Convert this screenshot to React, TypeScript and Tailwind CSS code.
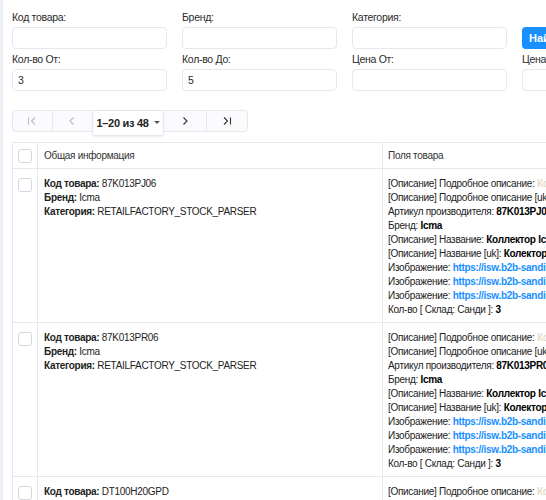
import React from 'react';

type Line = { label: React.ReactNode; value?: string; kind?: 'bold' | 'link' | 'faint' };

const fieldLines = (article: string): Line[] => [
  { label: '[Описание] Подробное описание: ', value: 'Коллектор Icma', kind: 'faint' },
  { label: '[Описание] Подробное описание [uk]: ', value: 'Колектор Icma', kind: 'faint' },
  { label: 'Артикул производителя: ', value: article, kind: 'bold' },
  { label: 'Бренд: ', value: 'Icma', kind: 'bold' },
  { label: '[Описание] Название: ', value: 'Коллектор Icma 1" 6 выходов', kind: 'bold' },
  { label: '[Описание] Название [uk]: ', value: 'Колектор Icma 1" 6 виходів', kind: 'bold' },
  { label: 'Изображение: ', value: 'https://isw.b2b-sandi.com.ua/imagecache/full/8/7/87K013.jpg', kind: 'link' },
  { label: 'Изображение: ', value: 'https://isw.b2b-sandi.com.ua/imagecache/full/8/7/87K013_1.jpg', kind: 'link' },
  { label: 'Изображение: ', value: 'https://isw.b2b-sandi.com.ua/imagecache/full/8/7/87K013_2.jpg', kind: 'link' },
  { label: 'Кол-во [ Склад: Санди ]: ', value: '3', kind: 'bold' },
];

const rows = [
  { code: '87K013PJ06', brand: 'Icma', category: 'RETAILFACTORY_STOCK_PARSER' },
  { code: '87K013PR06', brand: 'Icma', category: 'RETAILFACTORY_STOCK_PARSER' },
  { code: 'DT100H20GPD', brand: 'Icma', category: 'RETAILFACTORY_STOCK_PARSER' },
];

function Checkbox() {
  return <div className="w-[14px] h-[14px] rounded-[3px] border border-[#d4d7e0] bg-white" />;
}

function Field({ label, value }: { label: string; value?: string }) {
  return (
    <div className="flex flex-col">
      <label className="h-4 leading-4 text-[10.5px] tracking-[-0.3px] text-[#2b2b2b]">{label}</label>
      <div className="mt-[2px] h-[22px] rounded-[4px] border border-[#e6e8f0] bg-white px-[5px] text-[10.5px] leading-[20px] text-[#2b2b2b]">
        {value}
      </div>
    </div>
  );
}

function PageIcon({ d }: { d: string }) {
  return (
    <svg width="12" height="12" viewBox="0 0 12 12" fill="none" stroke="currentColor" strokeWidth="1.1">
      <path d={d} />
    </svg>
  );
}

export default function App() {
  return (
    <div className="w-[546px] h-[500px] overflow-hidden bg-white border-l-[3px] border-[#eef0f7] font-['Liberation_Sans',Arial,sans-serif] text-[#222]">
      <div className="pl-[9px] pt-[9px]">
        {/* Filters */}
        <div className="grid grid-cols-[155px_155px_155px_155px] gap-x-[15px] gap-y-[2px] w-[700px]">
          <Field label="Код товара:" />
          <Field label="Бренд:" />
          <Field label="Категория:" />
          <div className="flex flex-col">
            <div className="h-4" />
            <button className="mt-[2px] h-[22px] w-[80px] rounded-[4px] bg-[#1890ff] text-left pl-[7px] text-[11px] font-bold text-white">
              Найти
            </button>
          </div>
          <Field label="Кол-во От:" value="3" />
          <Field label="Кол-во До:" value="5" />
          <Field label="Цена От:" />
          <Field label="Цена До:" />
        </div>

        {/* Pagination */}
        <div className="mt-[19px] flex h-[22px] w-[236px] rounded-[4px] border border-[#e6e8f0] bg-[#fbfbfd] text-[11px] tracking-[-0.3px]">
          <div className="flex w-[40px] items-center justify-center border-r border-[#e6e8f0] text-[#b8bcc6]">
            <PageIcon d="M2.5 2.5v7M9 2.5 5.5 6 9 9.5" />
          </div>
          <div className="flex w-[40px] items-center justify-center text-[#b8bcc6]">
            <PageIcon d="M7.5 2.5 4 6l3.5 3.5" />
          </div>
          <div className="-mt-[1px] flex h-[26px] w-[72px] items-center justify-center gap-[5px] whitespace-nowrap rounded-[3px] border border-[#e6e8f0] bg-white font-bold text-[#222] shadow-[0_1px_2px_rgba(0,0,0,0.08)]">
            <span>1–20 из 48</span>
            <svg width="6" height="4" viewBox="0 0 6 4"><path d="M0 0h6L3 3z" fill="#555" /></svg>
          </div>
          <div className="flex w-[44px] items-center justify-center border-r border-[#e6e8f0] text-[#333]">
            <PageIcon d="M4.5 2.5 8 6l-3.5 3.5" />
          </div>
          <div className="flex w-[40px] items-center justify-center text-[#333]">
            <PageIcon d="M3 2.5 6.5 6 3 9.5M9.5 2.5v7" />
          </div>
        </div>

        {/* Table */}
        <div className="mt-[10px] w-[900px] border border-[#e6e8f0] text-[10px] tracking-[-0.3px] leading-[14px]">
          <div className="flex h-[26px] border-b border-[#e6e8f0]">
            <div className="flex w-[25px] shrink-0 items-center justify-center border-r border-[#e6e8f0]">
              <Checkbox />
            </div>
            <div className="flex w-[345px] shrink-0 items-center border-r border-[#e6e8f0] pl-[6px] text-[#333]">
              Общая информация
            </div>
            <div className="flex items-center pl-[5px] text-[#333]">Поля товара</div>
          </div>
          {rows.map((r) => (
            <div key={r.code} className="flex border-b border-[#e6e8f0]">
              <div className="flex w-[25px] shrink-0 justify-center border-r border-[#e6e8f0] pt-[9px]">
                <Checkbox />
              </div>
              <div className="w-[345px] shrink-0 border-r border-[#e6e8f0] pl-[6px] pt-[8px]">
                <div><b>Код товара:</b> {r.code}</div>
                <div><b>Бренд:</b> {r.brand}</div>
                <div><b>Категория:</b> {r.category}</div>
              </div>
              <div className="pl-[5px] pt-[8px] pb-[5px] whitespace-nowrap">
                {fieldLines(r.code).map((l, i) => (
                  <div key={i}>
                    {l.label}
                    {l.kind === 'bold' && <b className="text-black">{l.value}</b>}
                    {l.kind === 'link' && <b className="text-[#1890ff]">{l.value}</b>}
                    {l.kind === 'faint' && <b className="text-[#e5e0c8]">{l.value}</b>}
                  </div>
                ))}
              </div>
            </div>
          ))}
        </div>
      </div>
    </div>
  );
}
